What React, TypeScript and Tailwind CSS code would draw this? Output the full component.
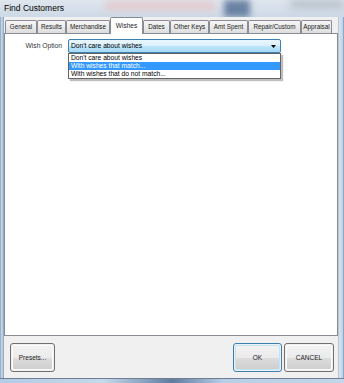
import React from "react";

const tabs: { label: string; w: string; selected?: boolean }[] = [
  { label: "General", w: "w-[32px]" },
  { label: "Results", w: "w-[29px]" },
  { label: "Merchandise", w: "w-[44px]" },
  { label: "Wishes", w: "w-[33px]", selected: true },
  { label: "Dates", w: "w-[27px]" },
  { label: "Other Keys", w: "w-[39px]" },
  { label: "Amt Spent", w: "w-[39px]" },
  { label: "Repair/Custom", w: "w-[53px]" },
  { label: "Appraisal", w: "w-[31px]" },
];

const options = ["Don't care about wishes", "With wishes that match...", "With wishes that do not match..."];

function Tab({ label, w, selected }: { label: string; w: string; selected?: boolean }) {
  if (selected) {
    return (
      <div className={`${w} h-[17px] relative z-10 -mb-px bg-white border border-b-0 border-[#898c95] rounded-t-[2px] flex items-center justify-center whitespace-nowrap text-[6.5px] text-[#1a1a1a]`}>
        {label}
      </div>
    );
  }
  return (
    <div className={`${w} h-[13px] border border-b-0 border-[#898c95] rounded-t-[2px] bg-gradient-to-b from-[#f6f6f6] via-[#ebebeb] to-[#dcdcdc] flex items-center justify-center whitespace-nowrap text-[6.3px] text-[#1a1a1a]`}>
      {label}
    </div>
  );
}

function WinButton({ label, w, isDefault }: { label: string; w: string; isDefault?: boolean }) {
  return (
    <button
      className={`${w} h-[29px] rounded-[3px] border ${isDefault ? "border-[#3c7fb1]" : "border-[#707070]"} p-px`}
    >
      <div
        className={`w-full h-full rounded-[2px] flex items-center justify-center text-[6.5px] text-[#222] ${isDefault ? "border border-[#bfe6f7]" : "border border-[#fbfbfb]"} bg-[linear-gradient(#f2f2f2_0%,#ebebeb_50%,#dddddd_51%,#cfcfcf_100%)]`}
      >
        {label}
      </div>
    </button>
  );
}

export default function App() {
  return (
    <div className="w-[344px] h-[383px] flex flex-col bg-[#b9cfe6] font-['Liberation_Sans',Arial,sans-serif] overflow-hidden">
      {/* title bar */}
      <div className="h-[17px] relative overflow-hidden bg-gradient-to-b from-[#dfe6ee] to-[#cdd9e6]">
        <div className="absolute left-[105px] top-[1px] w-[110px] h-[10px] bg-[#e7c4c6] blur-[3px] opacity-70" />
        <div className="absolute left-[224px] top-[0px] w-[26px] h-[17px] bg-[#6a82a3] blur-[3px]" />
        <div className="absolute left-[290px] top-[0px] w-[54px] h-[8px] bg-[#b4bcc6] blur-[4px]" />
        <div className="relative pl-[4px] pt-[3px] text-[8.5px] leading-[10px] text-black">Find Customers</div>
      </div>

      <div className="flex flex-1 min-h-0">
        {/* left frame */}
        <div className="w-[4px] bg-[linear-gradient(90deg,#7f93aa_0%,#c3d7ec_30%,#b2c9e1_70%,#8393a8_100%)]" />

        {/* client */}
        <div className="flex-1 flex flex-col bg-[#f0f0f0]">
          <div className="flex-1 flex flex-col">
            <div className="h-[16px] flex items-end pl-px">
              {tabs.map((t) => (
                <Tab key={t.label} {...t} />
              ))}
            </div>
            <div className="flex-1 relative bg-white border border-[#898c95]">
              <div className="flex items-center pt-[5px]">
                <div className="w-[57px] text-right text-[6.7px] text-[#333]">Wish Option</div>
                <div className="ml-[6px] w-[213px] h-[14px] border border-[#3c7fb1] rounded-[2px] bg-[linear-gradient(#eaf6fd_0%,#d9f0fc_50%,#bee6fd_51%,#a7d9f5_100%)] flex items-center justify-between pl-[2px] pr-[4px]">
                  <span className="text-[6.7px] text-black">Don't care about wishes</span>
                  <svg width="5" height="3" viewBox="0 0 5 3">
                    <path d="M0 0 H5 L2.5 3 Z" fill="#000" />
                  </svg>
                </div>
              </div>
              {/* open dropdown list */}
              <div className="absolute left-[63px] top-[19px] w-[213px] bg-white border border-[#646464] shadow-[2px_2px_1px_rgba(0,0,0,0.25)]">
                {options.map((o, i) => (
                  <div
                    key={o}
                    className={`h-[8px] leading-[8px] pl-[2px] text-[6.7px] ${i === 1 ? "bg-[#3399ff] text-white" : "text-black"}`}
                  >
                    {o}
                  </div>
                ))}
              </div>
            </div>
          </div>

          {/* button bar */}
          <div className="h-[42px] flex items-start pt-[7px] pl-[6px] pr-[4px]">
            <WinButton label="Presets..." w="w-[45px]" />
            <div className="flex-1" />
            <WinButton label="OK" w="w-[49px]" isDefault />
            <div className="w-[2px]" />
            <WinButton label="CANCEL" w="w-[50px]" />
          </div>
        </div>

        {/* right frame */}
        <div className="w-[6px] bg-[linear-gradient(90deg,#a9acb0_0%,#d6e4f2_20%,#bcd5ec_75%,#7c8ea4_100%)]" />
      </div>

      {/* bottom frame */}
      <div className="h-[5px] border-t border-[#6f7f93] bg-[linear-gradient(90deg,#b3cbe4_0%,#c6d9ec_30%,#5f7c9f_50%,#b8cfe6_65%,#c3d6ea_100%)]" />
    </div>
  );
}
